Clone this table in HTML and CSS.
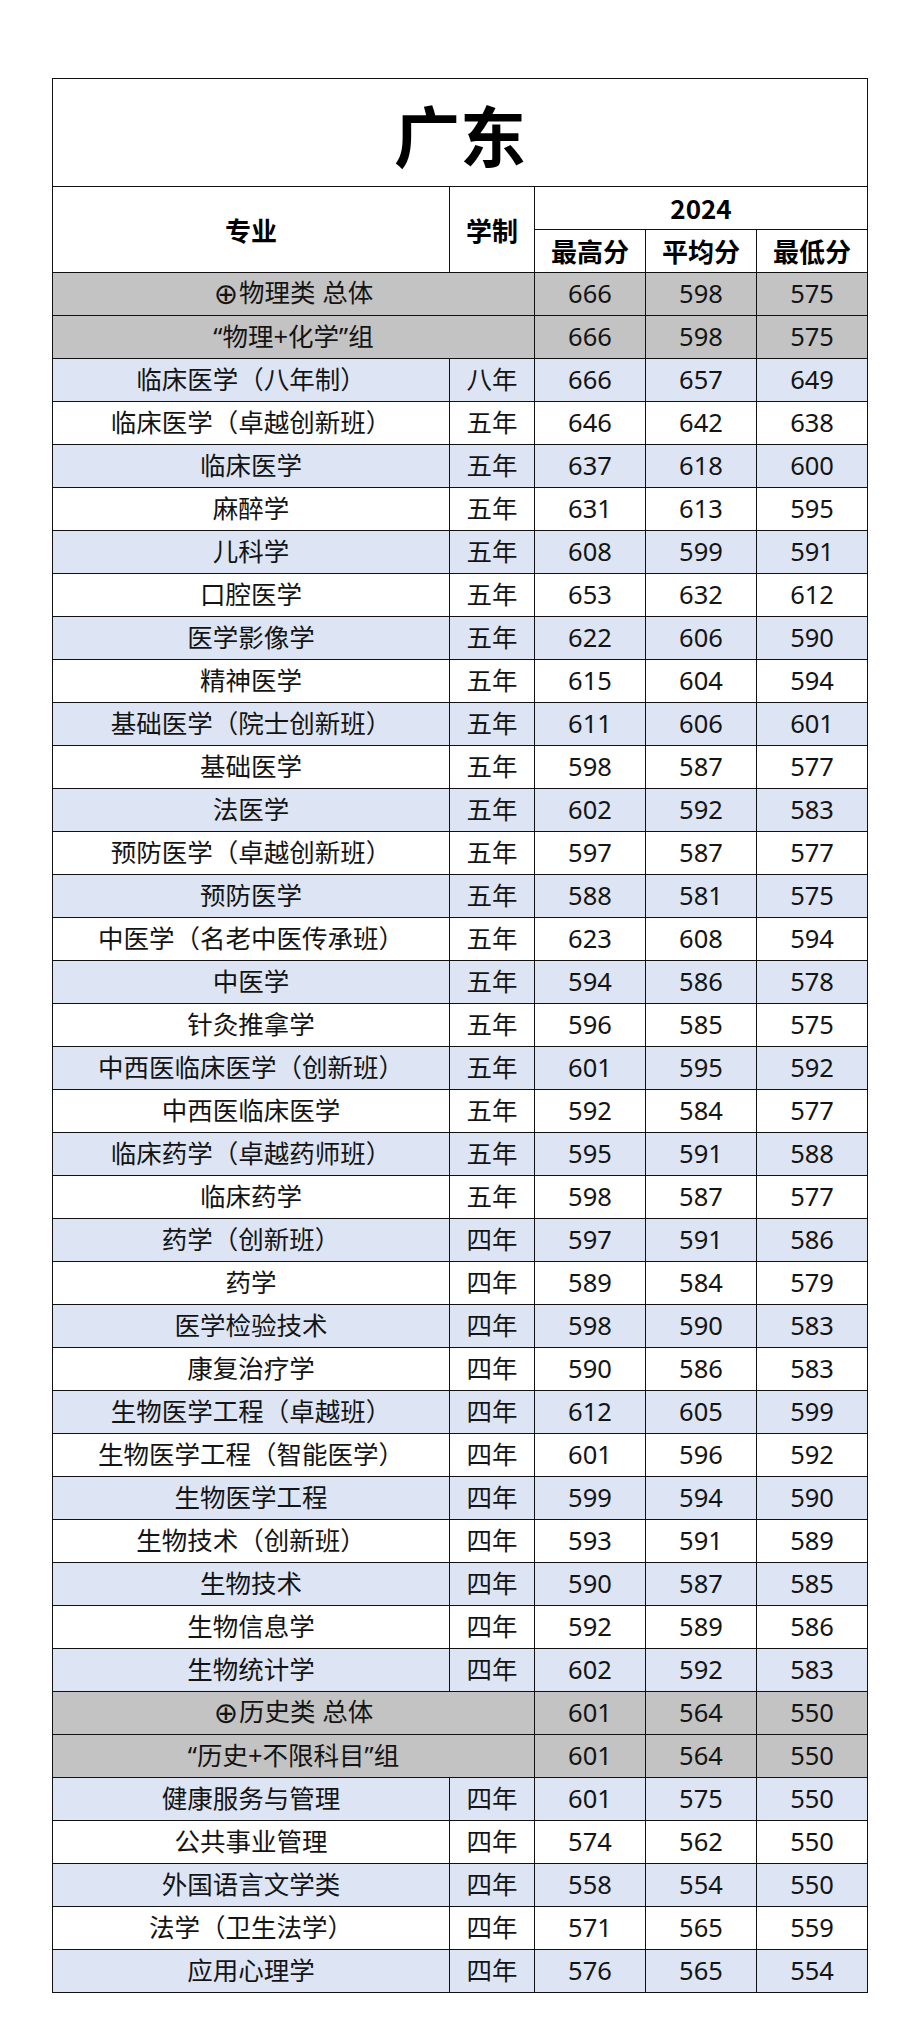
FILE: index.html
```html
<!DOCTYPE html>
<html lang="zh">
<head>
<meta charset="utf-8">
<title>广东</title>
<link rel="stylesheet" href="styles.css">
</head>
<body>
<div class="page">
<table class="score">
<colgroup>
<col class="c-major"><col class="c-len"><col class="c-num"><col class="c-num"><col class="c-num">
</colgroup>
<thead>
<tr class="title-row"><th colspan="5" class="title">广东</th></tr>
<tr class="head-row"><th rowspan="2">专业</th><th rowspan="2">学制</th><th colspan="3">2024</th></tr>
<tr class="head-row"><th>最高分</th><th>平均分</th><th>最低分</th></tr>
</thead>
<tbody>
<tr class="grp"><td colspan="2"><span class="circ">⊕</span>物理类 总体</td><td>666</td><td>598</td><td>575</td></tr>
<tr class="grp"><td colspan="2">“物理+化学”组</td><td>666</td><td>598</td><td>575</td></tr>
<tr class="blue"><td>临床医学（八年制）</td><td>八年</td><td>666</td><td>657</td><td>649</td></tr>
<tr class="white"><td>临床医学（卓越创新班）</td><td>五年</td><td>646</td><td>642</td><td>638</td></tr>
<tr class="blue"><td>临床医学</td><td>五年</td><td>637</td><td>618</td><td>600</td></tr>
<tr class="white"><td>麻醉学</td><td>五年</td><td>631</td><td>613</td><td>595</td></tr>
<tr class="blue"><td>儿科学</td><td>五年</td><td>608</td><td>599</td><td>591</td></tr>
<tr class="white"><td>口腔医学</td><td>五年</td><td>653</td><td>632</td><td>612</td></tr>
<tr class="blue"><td>医学影像学</td><td>五年</td><td>622</td><td>606</td><td>590</td></tr>
<tr class="white"><td>精神医学</td><td>五年</td><td>615</td><td>604</td><td>594</td></tr>
<tr class="blue"><td>基础医学（院士创新班）</td><td>五年</td><td>611</td><td>606</td><td>601</td></tr>
<tr class="white"><td>基础医学</td><td>五年</td><td>598</td><td>587</td><td>577</td></tr>
<tr class="blue"><td>法医学</td><td>五年</td><td>602</td><td>592</td><td>583</td></tr>
<tr class="white"><td>预防医学（卓越创新班）</td><td>五年</td><td>597</td><td>587</td><td>577</td></tr>
<tr class="blue"><td>预防医学</td><td>五年</td><td>588</td><td>581</td><td>575</td></tr>
<tr class="white"><td>中医学（名老中医传承班）</td><td>五年</td><td>623</td><td>608</td><td>594</td></tr>
<tr class="blue"><td>中医学</td><td>五年</td><td>594</td><td>586</td><td>578</td></tr>
<tr class="white"><td>针灸推拿学</td><td>五年</td><td>596</td><td>585</td><td>575</td></tr>
<tr class="blue"><td>中西医临床医学（创新班）</td><td>五年</td><td>601</td><td>595</td><td>592</td></tr>
<tr class="white"><td>中西医临床医学</td><td>五年</td><td>592</td><td>584</td><td>577</td></tr>
<tr class="blue"><td>临床药学（卓越药师班）</td><td>五年</td><td>595</td><td>591</td><td>588</td></tr>
<tr class="white"><td>临床药学</td><td>五年</td><td>598</td><td>587</td><td>577</td></tr>
<tr class="blue"><td>药学（创新班）</td><td>四年</td><td>597</td><td>591</td><td>586</td></tr>
<tr class="white"><td>药学</td><td>四年</td><td>589</td><td>584</td><td>579</td></tr>
<tr class="blue"><td>医学检验技术</td><td>四年</td><td>598</td><td>590</td><td>583</td></tr>
<tr class="white"><td>康复治疗学</td><td>四年</td><td>590</td><td>586</td><td>583</td></tr>
<tr class="blue"><td>生物医学工程（卓越班）</td><td>四年</td><td>612</td><td>605</td><td>599</td></tr>
<tr class="white"><td>生物医学工程（智能医学）</td><td>四年</td><td>601</td><td>596</td><td>592</td></tr>
<tr class="blue"><td>生物医学工程</td><td>四年</td><td>599</td><td>594</td><td>590</td></tr>
<tr class="white"><td>生物技术（创新班）</td><td>四年</td><td>593</td><td>591</td><td>589</td></tr>
<tr class="blue"><td>生物技术</td><td>四年</td><td>590</td><td>587</td><td>585</td></tr>
<tr class="white"><td>生物信息学</td><td>四年</td><td>592</td><td>589</td><td>586</td></tr>
<tr class="blue"><td>生物统计学</td><td>四年</td><td>602</td><td>592</td><td>583</td></tr>
<tr class="grp"><td colspan="2"><span class="circ">⊕</span>历史类 总体</td><td>601</td><td>564</td><td>550</td></tr>
<tr class="grp"><td colspan="2">“历史+不限科目”组</td><td>601</td><td>564</td><td>550</td></tr>
<tr class="blue"><td>健康服务与管理</td><td>四年</td><td>601</td><td>575</td><td>550</td></tr>
<tr class="white"><td>公共事业管理</td><td>四年</td><td>574</td><td>562</td><td>550</td></tr>
<tr class="blue"><td>外国语言文学类</td><td>四年</td><td>558</td><td>554</td><td>550</td></tr>
<tr class="white"><td>法学（卫生法学）</td><td>四年</td><td>571</td><td>565</td><td>559</td></tr>
<tr class="blue"><td>应用心理学</td><td>四年</td><td>576</td><td>565</td><td>554</td></tr>
</tbody>
</table>
</div>
</body>
</html>
```

FILE: styles.css
```css
html, body {
  margin: 0;
  padding: 0;
  background: #ffffff;
}
.page {
  padding: 78px 0 0 52px;
}
.score {
  border-collapse: collapse;
  table-layout: fixed;
  width: 816px;
  font-family: "Noto Sans", "Noto Sans CJK SC", sans-serif;
  color: #141414;
}
.c-major { width: 397px; }
.c-len { width: 85px; }
.c-num { width: 111px; }
.score th, .score td {
  border: 1px solid #111;
  padding: 0;
  text-align: center;
  vertical-align: middle;
  line-height: 1;
}
.title-row { height: 108px; }
.title {
  font-size: 66px;
  font-weight: 700;
  color: #000;
  font-family: "Noto Sans CJK SC", sans-serif;
}
.head-row { height: 43px; }
.head-row th {
  font-size: 26px;
  font-weight: 700;
  color: #000;
  font-family: "Noto Sans CJK SC", sans-serif;
}
.score tbody tr { height: 43px; }
.score tbody td {
  font-size: 25.5px;
  font-weight: 400;
}
.circ {
  font-size: 29px;
  font-family: "DejaVu Sans", sans-serif;
  vertical-align: -2px;
  margin-right: 1px;
}
.grp td { background: #c3c3c3; }
.blue td { background: #dde4f3; }
.white td { background: #ffffff; }
```
